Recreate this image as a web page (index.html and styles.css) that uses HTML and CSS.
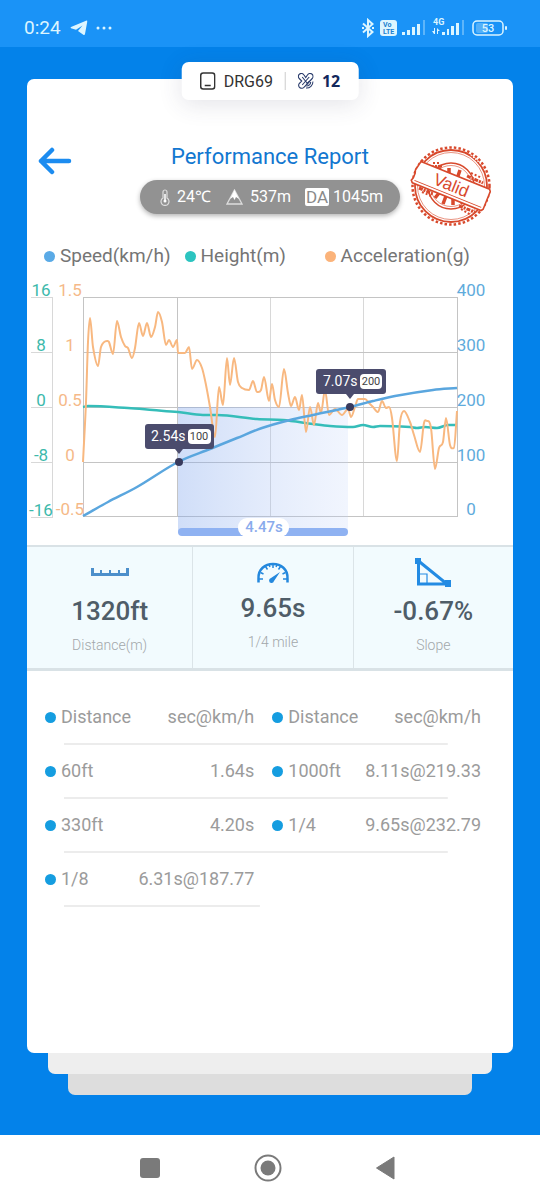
FILE: index.html
```html
<!DOCTYPE html>
<html lang="en">
<head>
    <meta charset="UTF-8">
    <meta name="viewport" content="width=device-width, initial-scale=1.0">
    <title>Performance Report</title>
    <link rel="stylesheet" href="styles.css">
</head>
<body>

    <div class="status-bar">
        <span class="clock">0:24</span>
        <svg class="telegram" width="18" height="16" viewBox="0 0 18 16"><path fill="currentColor" d="M1 7 16 .7q1.600-.5 1.200 1.300L15 14q-.4 1.500-1.700.7L8 11l4.500-5.500L6 9.800 1 8.200q-.9-.6 0-1.200z"/></svg>
        <svg width="18" height="4" viewBox="0 0 18 4" fill="currentColor"><circle cx="3" cy="2" r="1.500"/><circle cx="9" cy="2" r="1.500"/><circle cx="15" cy="2" r="1.500"/></svg>
        <div class="status-icons">
            <svg width="14" height="20" viewBox="0 0 14 20" fill="none" stroke="currentColor" stroke-width="2"><path d="M2 5.500 11.500 14 7 18V2l4.500 4L2 14.500"/><path d="M1 10h2M11 10h2"/></svg>
            <svg width="17" height="16" viewBox="0 0 17 16"><rect width="17" height="16" rx="3" fill="currentColor"/><text x="3" y="7" class="volte">Vo</text><text x="3" y="14" class="volte">LTE</text></svg>
            <svg width="24" height="16" viewBox="0 0 24 16" fill="currentColor"><rect y="12" width="3" height="3"/><rect x="5" y="10" width="3" height="5"/><rect x="10" y="7" width="3" height="8"/><rect x="15" y="4" width="3" height="11"/><rect x="21" y="0" width="2" height="15" opacity=".35"/></svg>
            <svg class="cell" width="34" height="18" viewBox="0 0 34 18" fill="currentColor"><text x="2" y="7" class="net">4G</text><path d="M1 13h2v-3h1v6H3zM6 16v-6l3 3H7v3zM11 14h3v3h-3zM16 11h2v6h-2zM20 8h3v9h-3zM25 5h3v12h-3z"/><rect x="31" y="2" width="2" height="15" opacity=".35"/></svg>
            <svg width="36" height="16" viewBox="0 0 36 16"><rect x="1" y="1" width="30" height="14" rx="4" fill="none" stroke="currentColor" stroke-width="1.500"/><rect x="4" y="3" width="12" height="10" rx="2" fill="currentColor" opacity=".3"/><rect x="33" y="6" width="2" height="4" rx="1" fill="currentColor"/><text x="16" y="12" text-anchor="middle" class="battery">53</text></svg>
        </div>
    </div>

    <main class="card">
        <div class="device">
            <svg width="16" height="18" viewBox="0 0 16 18" fill="none" stroke="#333" stroke-width="1.500"><rect x="1" y="1" width="14" height="16" rx="2.500"/><path d="M5 13.500h6"/></svg>
            <span>DRG69</span>
            <i class="divider"></i>
            <svg width="16" height="16" viewBox="0 0 16 16" fill="none" stroke="#2a3c6c" stroke-width="1.100"><path d="M1.500 5.500a3 3 0 1 1 4.800-3.500L8 4.500 9.700 2a3 3 0 1 1 4.800 3.500L6.500 14a3 3 0 1 1-5-3.500L4 8z"/><path d="m4.500 4 6 7.500M11.500 4l-7 8M12 8l-3 3"/><path d="M15.300 8.500a6.500 6.500 0 0 1-7 6.500M13 9a4.500 4.500 0 0 1-4.500 4"/></svg>
            <b>12</b>
        </div>

        <header class="header">
            <button class="back" aria-label="Back">
                <svg width="34" height="28" viewBox="0 0 34 28" fill="none" stroke="#1c8cf0" stroke-width="4.500" stroke-linecap="round" stroke-linejoin="round"><path d="M31 14H3M14 3 3 14l11 11"/></svg>
            </button>
            <div class="heading">
                <h1>Performance Report</h1>
                <div class="conditions">
                    <svg width="10" height="17" viewBox="0 0 10 17" fill="none" stroke="#ddd" stroke-width="1.200"><path d="M3 9V3a2 2 0 0 1 4 0v6a4 4 0 1 1-4 0z"/><path stroke="#fff" stroke-width="1.500" d="M5 5v6"/><circle cx="5" cy="12" r="1.500" fill="#fff" stroke="none"/></svg>
                    <span>24℃</span>
                    <svg class="peak" width="17" height="16" viewBox="0 0 17 16"><path fill="none" stroke="#ddd" stroke-width="1.300" d="M8.500 1 16 15H1z"/><path fill="#fff" d="M8.500 1 13 10l-3-2-1.500 3L7 8l-3 2z"/></svg>
                    <span>537m</span>
                    <span class="da">DA</span>
                    <span>1045m</span>
                </div>
            </div>
            <svg class="stamp" width="84" height="84" viewBox="-42 -41 84 84" fill="none" stroke="#d8492c">
                <circle r="38.500" stroke-width="2.500" stroke-dasharray="2.500 2.100"/>
                <circle r="36" stroke-width="1.800"/>
                <circle r="33.500" stroke-width=".6"/>
                <circle r="23" stroke-width="1.500"/>
                <circle r="20.500" stroke-width=".6"/>
                <path stroke-width="3.500" d="M-9-11-12-18M-2-9V-18M6-7 9-16M-12 7-16 12M-5 10-8 18M2 12V19M9 13 12 18"/>
                <path stroke-width="3" stroke-dasharray="4 1 2 1" d="M-21-19-8-20M16-10 32-3M-32 2-18 8M8 20 24 26"/>
                <path stroke-width="2" stroke-dasharray="2 2" d="M-18-23-10-23M20-13 31-8M-29 6-20 10M10 23 20 29"/>
                <path stroke="#fff" stroke-width="1.500" stroke-dasharray="1 2" d="M20-31 31-21"/>
                <g transform="rotate(22)">
                    <path fill="#fff" stroke-width="1.600" d="M-37-11.500H37l1.500 2v19l-1.500 2H-37l-2-2 1-3v-5l-1-3z"/>
                    <path stroke-width="1" d="M-36 8.500H36"/>
                    <text class="valid" x="0" y="5" text-anchor="middle">Valid</text>
                </g>
            </svg>
        </header>

        <ul class="legend">
            <li class="speed">Speed(km/h)</li>
            <li class="height">Height(m)</li>
            <li class="accel">Acceleration(g)</li>
        </ul>

        <svg class="chart" viewBox="0 0 486 267">
            <defs>
                <linearGradient id="range">
                    <stop offset="0" stop-color="#7ca3ec" stop-opacity=".36"/>
                    <stop offset="1" stop-color="#c0d2fa" stop-opacity=".22"/>
                </linearGradient>
            </defs>
            <g transform="translate(56 19)">
                <path class="grid light" d="M187 0V219M280 0V219"/>
                <path class="grid light" d="M-52 0H-31V220H-52M-52 55H-31M-52 110H-31M-52 165H-31"/>
                <path class="grid" d="M0 0H374V219H0zM0 55H374M0 110H374M0 165H374M94 0V219"/>

                <g class="axis height-axis">
                    <text x="-42" y="-1">16</text>
                    <text x="-42" y="54">8</text>
                    <text x="-42" y="109">0</text>
                    <text x="-42" y="164">-8</text>
                    <text x="-42" y="219">-16</text>
                </g>
                <g class="axis accel-axis">
                    <text x="-13" y="-1">1.5</text>
                    <text x="-13" y="54">1</text>
                    <text x="-13" y="109">0.5</text>
                    <text x="-13" y="164">0</text>
                    <text x="-13" y="218">-0.5</text>
                </g>
                <g class="axis speed-axis">
                    <text x="388" y="-1">400</text>
                    <text x="388" y="54">300</text>
                    <text x="388" y="109">200</text>
                    <text x="388" y="164">100</text>
                    <text x="388" y="218">0</text>
                </g>

                <rect x="95" y="110" width="170" height="126" fill="url(#range)"/>
                <path id="height" class="line height-line"/>
                <path id="accel" class="line accel-line"/>
                <path id="speed" class="line speed-line"/>

                <rect x="95" y="231" width="170" height="8" rx="4" fill="#8fb2f2"/>
                <rect x="155" y="221" width="51" height="19" rx="9" fill="#fff"/>
                <text class="range-label" x="181" y="235">4.47s</text>

                <g class="tip" transform="translate(62 127)">
                    <rect width="69" height="25" rx="3"/>
                    <path d="M30 25h8l-4 5z"/>
                    <circle cx="34" cy="38" r="4"/>
                    <text x="6" y="17">2.54s</text>
                    <rect class="tip-box" x="43" y="5" width="23" height="15" rx="4"/>
                    <text class="tip-value" x="54" y="16">100</text>
                </g>
                <g class="tip" transform="translate(233 72)">
                    <rect width="70" height="25" rx="3"/>
                    <path d="M30 25h8l-4 5z"/>
                    <circle cx="34" cy="38" r="4"/>
                    <text x="7" y="17">7.07s</text>
                    <rect class="tip-box" x="44" y="5" width="22" height="15" rx="4"/>
                    <text class="tip-value" x="55" y="16">200</text>
                </g>
            </g>
        </svg>

        <section class="stats">
            <div class="stat">
                <svg width="40" height="32" viewBox="0 0 40 32" fill="none" stroke="#4c8fcb"><path stroke-width="3" d="M2.500 11v6.500h35V11"/><path stroke-width="2" d="M11 13v4M20 13v4M29 13v4"/></svg>
                <strong>1320ft</strong>
                <span>Distance(m)</span>
            </div>
            <div class="stat middle">
                <svg width="34" height="32" viewBox="0 0 34 32" fill="none" stroke="#2488dd"><path stroke-width="2.500" d="M2.500 28.500V25C1 5 33 5 31.500 25v3.500"/><path stroke-width="1.500" d="M17 10v4M9.500 12.500l2 3M24.500 12.500l-2 3M4.500 18.500l3 1.500M29.500 18.500l-3 1.500M3 25h4M31 25h-4M13 11l1 2M21 11l-1 2"/><path fill="#2488dd" stroke="none" d="m24 18-6 9a2.500 2.500 0 1 1-3-3z"/></svg>
                <strong>9.65s</strong>
                <span>1/4 mile</span>
            </div>
            <div class="stat">
                <svg width="38" height="32" viewBox="0 0 38 32" fill="none" stroke="#238be3"><path stroke-width="3" d="M4.500 4v23H33z"/><path stroke-width="1.200" d="M5 17h8v9"/><path fill="#238be3" stroke="none" d="M1 1h6v6H1zM31 23h6v7h-6z"/></svg>
                <strong>-0.67%</strong>
                <span>Slope</span>
            </div>
        </section>

        <table class="splits">
            <thead>
                <tr><th>Distance</th><th>sec@km/h</th><th>Distance</th><th>sec@km/h</th></tr>
            </thead>
            <tbody>
                <tr><td>60ft</td><td>1.64s</td><td>1000ft</td><td>8.11s@219.33</td></tr>
                <tr><td>330ft</td><td>4.20s</td><td>1/4</td><td>9.65s@232.79</td></tr>
                <tr class="half"><td>1/8</td><td>6.31s@187.77</td><td></td><td></td></tr>
            </tbody>
        </table>
    </main>
    <div class="sheet"></div>
    <div class="sheet back-sheet"></div>

    <nav class="nav">
        <button aria-label="Recent apps"><svg width="28" height="28" viewBox="0 0 28 28"><rect x="4" y="4" width="20" height="20" rx="3" fill="#7a7a7a"/></svg></button>
        <button aria-label="Home"><svg width="28" height="28" viewBox="0 0 28 28"><circle cx="14" cy="14" r="12.500" fill="none" stroke="#7a7a7a" stroke-width="2"/><circle cx="14" cy="14" r="7.500" fill="#7a7a7a"/></svg></button>
        <button aria-label="Back"><svg width="28" height="28" viewBox="0 0 28 28"><path fill="#7a7a7a" stroke="#7a7a7a" stroke-linejoin="round" d="M22 3v22L4.500 14z"/></svg></button>
    </nav>

    <script src="script.js"></script>
</body>
</html>
```
FILE: styles.css
```css
* {
    box-sizing: border-box;
}
body {
    margin: 0;
    min-height: 100vh;
    display: flex;
    flex-direction: column;
    background: #0382ea;
    font-family: Roboto, 'Noto Sans', sans-serif;
}
svg {
    display: block;
}
button {
    padding: 0;
    border: none;
    background: none;
    cursor: pointer;
}

/* status bar */
.status-bar {
    display: flex;
    align-items: center;
    height: 47px;
    padding: 8px 32px 0 24px;
    background: #1a93f7;
    color: #dcf5ff;
}
.clock {
    font-size: 19px;
}
.telegram {
    margin: 0 7px 0 9px;
}
.status-icons {
    display: flex;
    align-items: center;
    gap: 5px;
    margin-left: auto;
}
.cell {
    margin: 0 2px 2px 0;
}
.volte {
    font-size: 7px;
    font-weight: 700;
    fill: #1a7fd0;
}
.net {
    font-size: 9px;
    font-weight: 700;
}
.battery {
    font-size: 11px;
    font-weight: 500;
    fill: currentColor;
}

/* report card */
.card {
    position: relative;
    flex: 1;
    margin: 32px 27px 0;
    background: #fff;
    border-radius: 7px;
}
.device {
    position: absolute;
    top: -17px;
    left: 50%;
    transform: translateX(-50%);
    display: flex;
    align-items: center;
    gap: 8px;
    height: 38px;
    padding: 0 18px;
    background: #fff;
    border-radius: 7px;
    box-shadow: 0 4px 24px rgba(60, 60, 90, 0.14);
    font-size: 16px;
    color: #333;
}
.device b {
    font-family: 'Noto Sans', sans-serif;
    color: #12285c;
}
.divider {
    width: 1px;
    height: 18px;
    margin: 0 4px;
    background: #ccc;
}
.header {
    display: grid;
    grid-template-columns: 84px 1fr 84px;
    align-items: start;
    padding: 66px 20px 0 11px;
}
.back {
    justify-self: start;
    padding-top: 2px;
}
.heading {
    display: flex;
    flex-direction: column;
    align-items: center;
    margin: 0 -20px 0 -11px;
}
h1 {
    margin: 0;
    font-size: 22px;
    font-weight: 400;
    line-height: 24px;
    color: #1277d0;
}
.conditions {
    display: flex;
    align-items: center;
    gap: 7px;
    height: 34px;
    margin-top: 11px;
    padding: 0 17px 0 20px;
    border-radius: 17px;
    background: #929292;
    box-shadow: 0 2px 5px rgba(0, 0, 0, 0.3);
    color: #fff;
    font-size: 17px;
    line-height: 20px;
    white-space: nowrap;
}
.conditions span {
    font-size: 16px;
}
.peak {
    margin-left: 8px;
}
.conditions .da {
    margin: 0 -3px 0 7px;
    padding: 0 1px;
    border-radius: 2px;
    background: #fff;
    color: #8a8a8a;
    font-size: 17px;
    line-height: 18px;
}
.valid {
    font-family: 'Liberation Sans', sans-serif;
    font-size: 17px;
    fill: #d8492c;
    stroke: none;
}
.legend {
    display: flex;
    gap: 14px;
    margin: 15px 0 0;
    padding: 0 43px 0 17px;
    list-style: none;
    font-size: 19px;
    line-height: 24px;
    color: #757575;
}
.legend li {
    display: flex;
    align-items: center;
    gap: 5px;
}
.legend li::before {
    content: '';
    width: 11px;
    height: 11px;
    border-radius: 50%;
    background: currentColor;
}
.legend .accel {
    margin-left: auto;
}
.legend .speed::before {
    background: #5aaae6;
}
.legend .height::before {
    background: #2cc4c0;
}
.legend .accel::before {
    background: #fbb37a;
}

/* chart */
.chart {
    width: 100%;
    height: auto;
    margin-top: 10px;
}
.grid {
    fill: none;
    stroke: #c4c4c4;
    shape-rendering: crispEdges;
}
.grid.light {
    stroke: #d8d8d8;
}
.axis {
    font-size: 17px;
    text-anchor: middle;
}
.height-axis {
    fill: #3cb9ab;
}
.accel-axis {
    fill: #f5b988;
}
.speed-axis {
    fill: #5fabdc;
}
.line {
    fill: none;
    stroke-linejoin: round;
}
.height-line {
    stroke: #35bdb9;
    stroke-width: 2.5px;
}
.accel-line {
    stroke: #f8b880;
    stroke-width: 2px;
}
.speed-line {
    stroke: #5aa6de;
    stroke-width: 2.5px;
}
.range-label {
    font-size: 15px;
    font-weight: 500;
    text-anchor: middle;
    fill: #8aabec;
}
.tip {
    fill: #4b4c6d;
}
.tip circle {
    fill: #393a5c;
}
.tip text {
    font-size: 14px;
    fill: #fff;
}
.tip .tip-box {
    fill: #fff;
}
.tip .tip-value {
    font-size: 11px;
    text-anchor: middle;
    fill: #444;
}

/* stats */
.stats {
    display: grid;
    grid-template-columns: 34fr 33fr 33fr;
    border: solid #d9e2e6;
    border-width: 2px 0 3px;
    background: #f2fbfe;
}
.stat {
    display: flex;
    flex-direction: column;
    align-items: center;
    height: 121px;
    padding-top: 10px;
    border-left: 1px solid #dbe4e8;
}
.stat:first-child {
    border-left: none;
}
.stat.middle {
    padding-top: 7px;
}
.stat strong {
    margin-top: 6px;
    font-size: 26px;
    font-weight: 500;
    line-height: 32px;
    color: #4f5d68;
}
.stat span {
    margin-top: 8px;
    font-size: 14px;
    font-weight: 300;
    line-height: 20px;
    color: #a2a7aa;
}

/* split times */
.splits {
    width: calc(100% - 50px);
    margin: 20px 32px 0 18px;
    border-collapse: collapse;
    table-layout: fixed;
    font-size: 18px;
    line-height: 20px;
    color: #9b9b9b;
}
.splits tr {
    height: 54px;
    background: linear-gradient(#ececec, #ececec) 19px bottom / 88% 2px no-repeat;
}
.splits .half {
    background-size: 45% 2px;
}
.splits th, .splits td {
    width: 28%;
    padding: 0 0 2px;
    font-weight: 400;
    text-align: right;
    white-space: nowrap;
}
.splits th:nth-child(odd), .splits td:nth-child(odd) {
    width: 20%;
    text-align: left;
}
.splits th:nth-child(3), .splits td:nth-child(3) {
    width: 24%;
    padding-left: 18px;
}
.splits th:nth-child(odd)::before, .splits td:nth-child(odd):not(:empty)::before {
    content: '';
    display: inline-block;
    width: 11px;
    height: 11px;
    margin-right: 5px;
    border-radius: 50%;
    background: #159de0;
}

/* stacked sheets under the card */
.sheet {
    height: 21px;
    margin: 0 48px;
    border-radius: 0 0 7px 7px;
    background: #eee;
}
.back-sheet {
    margin: 0 68px 40px;
    background: #ddd;
}
.nav {
    display: flex;
    justify-content: center;
    height: 65px;
    padding-right: 4px;
    background: #fff;
}
.nav button {
    display: flex;
    justify-content: center;
    align-items: center;
    width: 118px;
}
```
FILE: script.js
```js
// [x, y] points in plot units
const series = {
    speed: [
        [0, 219], [25, 205], [54, 190], [95, 165],
        [127, 152], [154, 141], [179, 131], [207, 123], [230, 118], [267, 110],
        [290, 104], [312, 99], [350, 93], [374, 91]
    ],
    height: [
        [0, 110], [5, 109], [45, 111], [70, 113], [95, 115], [120, 118], [134, 118],
        [174, 122], [200, 123], [230, 127], [247, 129], [270, 130], [280, 128],
        [290, 130], [297, 129], [327, 130], [334, 131], [342, 130], [354, 131],
        [365, 128], [374, 128]
    ],
    accel: [
        [0, 165], [3, 105], [5, 45], [7, 21], [10, 50], [15, 69], [18, 50], [24, 44],
        [26, 45], [30, 57], [34, 24], [38, 40], [42, 49], [45, 51], [49, 61], [52, 51],
        [56, 26], [60, 39], [64, 26], [68, 40], [72, 30], [75, 15], [79, 25], [83, 48],
        [86, 43], [90, 50], [94, 43], [95, 56], [102, 56], [106, 50], [109, 72],
        [114, 63], [119, 71], [123, 88], [127, 110], [132, 140], [136, 90], [140, 108],
        [144, 61], [147, 88], [151, 61], [155, 85], [159, 91], [166, 93], [170, 84],
        [174, 95], [178, 93], [181, 80], [186, 104], [189, 87], [192, 103], [196, 110],
        [201, 72], [205, 96], [208, 109], [212, 100], [216, 113], [219, 98], [223, 135],
        [227, 110], [231, 128], [235, 106], [238, 116], [242, 93], [246, 118],
        [252, 112], [259, 118], [265, 112], [268, 120], [272, 110], [275, 102],
        [282, 102], [286, 106], [290, 110], [295, 115], [299, 104], [303, 111],
        [306, 110], [309, 121], [314, 164], [317, 125], [321, 114], [327, 125],
        [331, 138], [337, 155], [341, 126], [344, 124], [348, 131], [352, 172],
        [356, 151], [360, 145], [363, 121], [367, 148], [371, 151], [374, 114]
    ]
};

// flat at peaks and valleys, otherwise the slope between the neighbours
function slope(points, i) {
    const prev = points[i - 1] || points[i];
    const next = points[i + 1] || points[i];
    const y = points[i][1];
    const isEnd = prev === points[i] || next === points[i];
    if (!isEnd && (y - prev[1]) * (next[1] - y) <= 0) return 0;
    return (next[1] - prev[1]) / (next[0] - prev[0]);
}

function smoothPath(points) {
    let d = `M${points[0]}`;
    for (let i = 1; i < points.length; i++) {
        const [x0, y0] = points[i - 1];
        const [x1, y1] = points[i];
        const step = (x1 - x0) / 3;
        d += `C${x0 + step},${y0 + slope(points, i - 1) * step} ${x1 - step},${y1 - slope(points, i) * step} ${x1},${y1}`;
    }
    return d;
}

Object.keys(series).forEach(name => {
    document.getElementById(name).setAttribute('d', smoothPath(series[name]));
});
```
